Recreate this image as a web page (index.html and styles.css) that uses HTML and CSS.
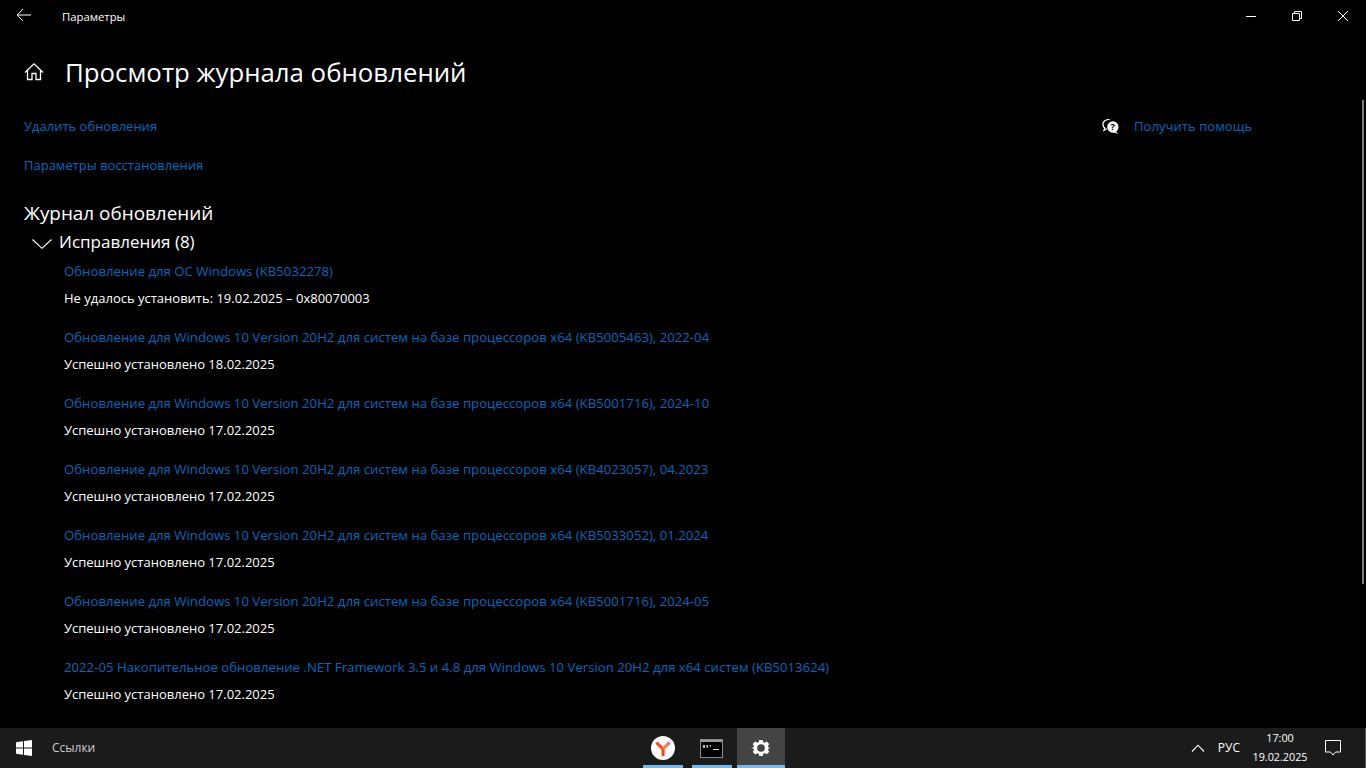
FILE: index.html
```html
<!DOCTYPE html>
<html lang="ru">
<head>
    <meta charset="UTF-8">
    <title>Параметры</title>
    <link rel="stylesheet" href="styles.css">
</head>
<body>
    <div class="window">
        <!-- Title bar -->
        <div class="titlebar">
            <svg class="back-icon" width="16" height="16" viewBox="0 0 16 16"><path d="M7 2 1.200 8 7 14M1.200 8H15" fill="none" stroke="#fff" stroke-width="1"/></svg>
            <span class="app-name">Параметры</span>
            <div class="window-buttons">
                <svg width="46" height="32" viewBox="0 0 46 32"><path d="M18 16.500h10" stroke="#fff" fill="none"/></svg>
                <svg width="46" height="32" viewBox="0 0 46 32"><path d="M18.500 13.500h7v7h-7zM20.500 13.500v-2h7v7h-2" stroke="#fff" fill="none"/></svg>
                <svg width="46" height="32" viewBox="0 0 46 32"><path d="M18 11l10 10M28 11 18 21" stroke="#fff" fill="none"/></svg>
            </div>
        </div>

        <div class="page">
            <div class="page-title">
                <svg class="home-icon" width="20" height="20" viewBox="0 0 20 20"><path d="M1 10.500 10 1.800l9 8.700M3.500 8.500v9h4.500v-6h4v6h4.500v-9" fill="none" stroke="#fff" stroke-width="1.300"/></svg>
                <h1>Просмотр журнала обновлений</h1>
            </div>

            <div class="columns">
                <div class="content">
                    <a class="link top-link">Удалить обновления</a>
                    <a class="link top-link">Параметры восстановления</a>

                    <h2>Журнал обновлений</h2>

                    <div class="group-head">
                        <svg class="chevron" width="20" height="10" viewBox="0 0 20 10"><path d="M.5 .5 10 9.300 19.500 .5" fill="none" stroke="#fff" stroke-width="1.100"/></svg>
                        <span>Исправления (8)</span>
                    </div>

                    <ul class="updates">
                        <li><a class="link">Обновление для ОС Windows (KB5032278)</a><p>Не удалось установить: 19.02.2025 – 0x80070003</p></li>
                        <li><a class="link">Обновление для Windows 10 Version 20H2 для систем на базе процессоров x64 (KB5005463), 2022-04</a><p>Успешно установлено 18.02.2025</p></li>
                        <li><a class="link">Обновление для Windows 10 Version 20H2 для систем на базе процессоров x64 (KB5001716), 2024-10</a><p>Успешно установлено 17.02.2025</p></li>
                        <li><a class="link">Обновление для Windows 10 Version 20H2 для систем на базе процессоров x64 (KB4023057), 04.2023</a><p>Успешно установлено 17.02.2025</p></li>
                        <li><a class="link">Обновление для Windows 10 Version 20H2 для систем на базе процессоров x64 (KB5033052), 01.2024</a><p>Успешно установлено 17.02.2025</p></li>
                        <li><a class="link">Обновление для Windows 10 Version 20H2 для систем на базе процессоров x64 (KB5001716), 2024-05</a><p>Успешно установлено 17.02.2025</p></li>
                        <li><a class="link">2022-05 Накопительное обновление .NET Framework 3.5 и 4.8 для Windows 10 Version 20H2 для x64 систем (KB5013624)</a><p>Успешно установлено 17.02.2025</p></li>
                    </ul>
                </div>

                <div class="help">
                    <svg width="19" height="19" viewBox="0 0 20 20"><path d="M9 2.500C5 2.500 2 4.800 2 7.800c0 1.500.7 2.800 2 3.700L3.200 14l3-1.600" fill="none" stroke="#fff" stroke-width="1.400"/><circle cx="12.500" cy="10.500" r="6" fill="#fff"/><path d="M15.500 15 18 18l-5-2z" fill="#fff"/><text class="help-mark" x="12.500" y="14">?</text></svg>
                    <a class="link">Получить помощь</a>
                </div>
            </div>
        </div>

        <div class="scrollbar"></div>
    </div>

    <!-- Taskbar -->
    <div class="taskbar">
        <svg class="start" width="16" height="16" viewBox="0 0 16 16"><path d="M0 2.300 7 1.300v6.300H0zM8 1.100 16 0v7.600H8zM0 8.500h7v6.200L0 13.700zM8 8.500h8V16l-8-1.100z" fill="#fff"/></svg>
        <span class="links">Ссылки</span>

        <div class="task-apps">
            <div class="task-app">
                <svg width="24" height="24" viewBox="0 0 24 24"><circle cx="12" cy="12" r="12" fill="#fff"/><path d="M5.500 6.500 12 13v7" fill="none" stroke="#fc3f1d" stroke-width="3"/><path d="M12 13l6.500-6.500" fill="none" stroke="#ff7a3c" stroke-width="3"/><path d="M16.500 8.500l2-2" stroke="#f05ad8" stroke-width="3"/></svg>
            </div>
            <div class="task-app">
                <svg class="console-icon" width="23" height="19" viewBox="0 0 23 19"><rect x=".5" y=".5" width="22" height="18" fill="#000" stroke="#8a8a8a"/><rect x="1" y="1" width="21" height="2" fill="#9a9a9a"/><path d="M3 6h2v3H3zM6.500 6h1.500v3H6.500zM9.500 6h1.500v1.500H9.500z" fill="#bbb"/><path d="M13 10.500h6" stroke="#ddd"/></svg>
            </div>
            <div class="task-app active">
                <svg width="20" height="20" viewBox="0 0 20 20"><path d="M8 1h4l.5 2.500 1.600.7 2.200-1.400 2.800 2.800-1.400 2.200.7 1.600L21 9.900l-2.500.5-.7 1.600 1.400 2.200-2.800 2.800-2.200-1.400-1.600.7L12 19H8l-.5-2.500-1.600-.7-2.200 1.400-2.800-2.800 1.400-2.200-.7-1.600L-1 10l2.500-.5.7-1.600L.8 5.600l2.800-2.800 2.200 1.400 1.600-.7z" transform="translate(1 1) scale(.9)" fill="#fff"/><circle cx="10" cy="10" r="3.800" fill="#444"/></svg>
            </div>
        </div>

        <div class="tray">
            <svg width="14" height="8" viewBox="0 0 14 8"><path d="M1 7.500 7 1.200l6 6.300" fill="none" stroke="#fff" stroke-width="1.100"/></svg>
            <span class="lang">РУС</span>
            <div class="clock"><span>17:00</span><span>19.02.2025</span></div>
            <svg width="16" height="16" viewBox="0 0 16 16"><path d="M.5 .5h15v11.500h-5L8 15l-2.500-3H.5z" fill="none" stroke="#fff"/></svg>
        </div>
    </div>
</body>
</html>
```

FILE: styles.css
```css
/* General */
* {
    box-sizing: border-box;
}

body {
    margin: 0;
    height: 768px;
    overflow: hidden;
    background: #000;
    color: #fff;
    font-family: "Open Sans", "Noto Sans", sans-serif;
    font-size: 13px;
}

.window {
    position: relative;
    height: 728px;
    overflow: hidden;
}

.link {
    color: #0069bd;
}

svg {
    display: block;
    flex-shrink: 0;
}

/* Title bar */
.titlebar {
    display: flex;
    align-items: center;
    height: 32px;
    padding-left: 16px;
}

.back-icon {
    margin-top: -2px;
}

.app-name {
    margin-left: 30px;
    font-size: 11.3px;
}

.window-buttons {
    display: flex;
    margin-left: auto;
}

/* Page header */
.page {
    padding-left: 24px;
}

.page-title {
    display: flex;
    align-items: center;
    height: 40px;
    margin-top: 20px;
}

h1 {
    margin: 0 0 0 21px;
    font-size: 25.8px;
    font-weight: 400;
    line-height: 40px;
}

/* Columns */
.columns {
    display: flex;
}

.content {
    width: 1077px;
}

.top-link {
    display: block;
    height: 39px;
    line-height: 20px;
}

.top-link:first-child {
    margin-top: 24px;
}

h2 {
    margin: 6px 0 0;
    font-size: 18.9px;
    font-weight: 400;
    line-height: 26px;
}

.group-head {
    display: flex;
    align-items: center;
    height: 26px;
    margin-top: 2px;
    font-size: 17px;
}

.chevron {
    margin: 6px 7px 0 8px;
}

/* Update list */
.updates {
    margin: 1px 0 0;
    padding: 0 0 0 40px;
    list-style: none;
}

.updates li {
    height: 66px;
    padding-top: 6px;
    line-height: 20px;
}

.updates a {
    display: block;
    font-size: 13.2px;
    white-space: nowrap;
}

.updates p {
    margin: 7px 0 0;
}

/* Help aside */
.help {
    display: flex;
    align-items: center;
    height: 20px;
    margin-top: 24px;
    gap: 14px;
    font-size: 13.13px;
}

.help-mark {
    fill: #000;
    font-size: 10px;
    font-weight: 700;
    text-anchor: middle;
}

.scrollbar {
    position: absolute;
    top: 100px;
    right: 2px;
    width: 2px;
    height: 484px;
    background: #7a7a7a;
}

/* Taskbar */
.taskbar {
    position: relative;
    display: flex;
    align-items: center;
    height: 40px;
    padding-left: 16px;
    background: #1b1b1b;
    border-right: 1px solid #555;
    font-size: 12px;
}

.links {
    margin: 0 0 2px 20px;
    color: #ccc;
}

.task-apps {
    position: absolute;
    top: 0;
    left: 643px;
    display: flex;
}

.task-app {
    display: flex;
    align-items: center;
    justify-content: center;
    width: 40px;
    height: 40px;
    margin-right: 9px;
    border-bottom: 3px solid #76b9ed;
}

.task-app svg {
    margin-top: 3px;
}

.task-app .console-icon {
    margin-right: 2px;
}

.task-app.active {
    width: 48px;
    margin: 0 0 0 -4px;
    background: #444;
}

.tray {
    display: flex;
    align-items: center;
    margin-left: auto;
    padding-right: 24px;
}

.lang {
    margin: 0 0 2px 13px;
}

.clock {
    display: flex;
    flex-direction: column;
    align-items: center;
    width: 54px;
    margin: 0 18px 2px 13px;
    font-size: 10.8px;
    line-height: 19px;
}
```
